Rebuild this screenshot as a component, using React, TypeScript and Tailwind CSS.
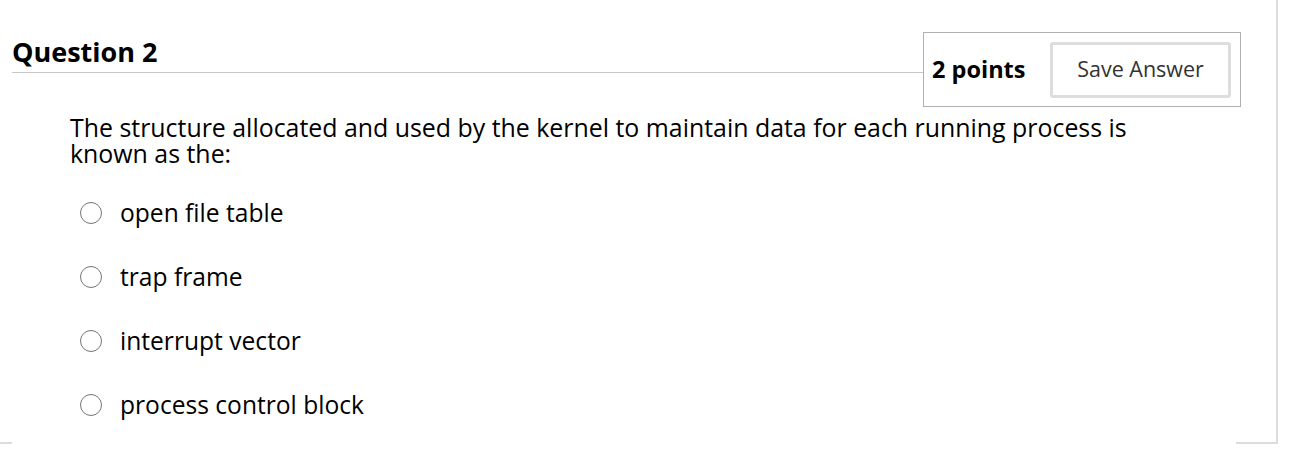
export default function App() {
  const options = ['open file table', 'trap frame', 'interrupt vector', 'process control block'];

  return (
    <div className="w-[1306px] h-[468px] bg-white" style={{ fontFamily: '"Open Sans", sans-serif' }}>
      <div className="w-[1278px] h-[444px] border-r-2 border-[#dcdcdc] flex flex-col">
        <div className="flex items-start pl-3 pr-[35px]">
          <div className="flex-1 border-b border-[#c8c8c8] h-[73px] pt-[36px]">
            <h2 className="text-[27px] leading-[32px] font-bold text-black">Question 2</h2>
          </div>
          <div className="mt-[32px] w-[318px] h-[75px] border border-[#b0b0b0] flex items-center pl-[8px] pr-[9px] justify-between">
            <span className="text-[23.5px] font-bold text-black">2 points</span>
            <button className="w-[181px] h-[56px] border-[3px] border-[#dddddd] rounded-[3px] text-[21.5px] text-[#333]">
              Save Answer
            </button>
          </div>
        </div>

        <div className="pl-[70px] pr-[110px] mt-[7px] text-[24.9px] leading-[26px] text-black">
          The structure allocated and used by the kernel to maintain data for each running process is known as the:
        </div>

        <div className="flex flex-col pl-[80px] mt-[32px] gap-[34px]">
          {options.map((o) => (
            <label key={o} className="flex items-center gap-[18px] h-[30px] text-[24.6px] text-black">
              <span className="w-[22px] h-[22px] rounded-full border-[1.5px] border-[#767676] shrink-0" />
              {o}
            </label>
          ))}
        </div>

        <div className="mt-auto flex justify-between">
          <div className="w-3 border-b-2 border-[#dcdcdc]" />
          <div className="w-[40px] border-b-2 border-[#dcdcdc]" />
        </div>
      </div>
    </div>
  );
}
